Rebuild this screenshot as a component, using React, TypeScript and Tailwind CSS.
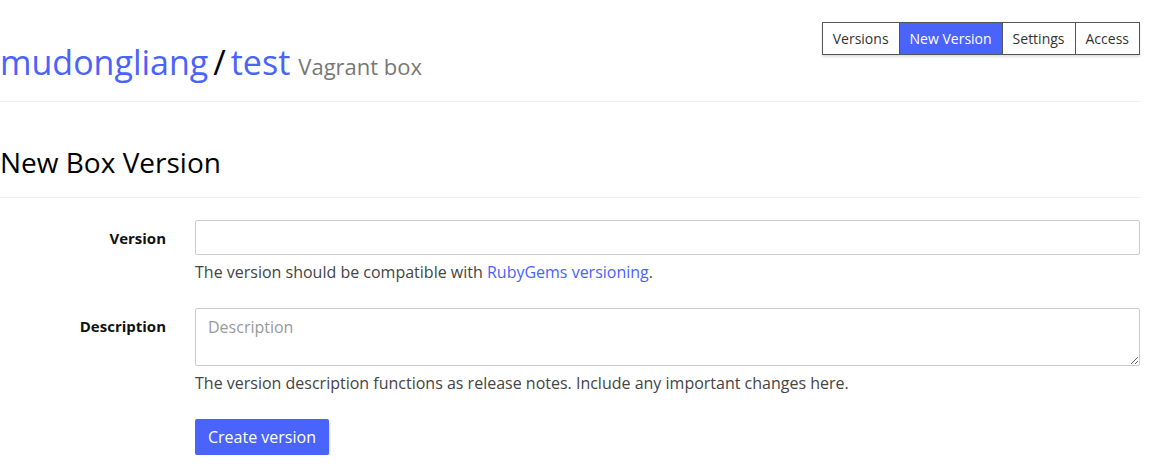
import { useState } from 'react'

const tabs = ['Versions', 'New Version', 'Settings', 'Access']

function Tabs({ active }: { active: string }) {
  return (
    <div className="flex border border-[#555] shadow-[0_2px_2px_rgba(0,0,0,0.12)]">
      {tabs.map((t, i) => (
        <a
          key={t}
          href="#"
          className={
            'h-[31px] flex items-center text-[14px] leading-none ' +
            (i > 0 ? 'border-l border-[#555] ' : '') +
            (t === active ? 'bg-[#4a63fb] text-white px-[10px]' : 'bg-white text-[#333] px-[10px]')
          }
        >
          {t}
        </a>
      ))}
    </div>
  )
}

function Row({ label, children }: { label: string; children: React.ReactNode }) {
  return (
    <div className="flex">
      <label className="w-[166px] shrink-0 text-right font-bold text-[15px] text-[#111] pt-[7px]">{label}</label>
      <div className="flex-1 ml-[29px]">{children}</div>
    </div>
  )
}

export default function App() {
  const [version, setVersion] = useState('')
  const [desc, setDesc] = useState('')

  return (
    <div className="w-[1140px] bg-white text-[#333]" style={{ fontFamily: '"Open Sans", sans-serif' }}>
      <div className="flex items-start justify-between h-[102px] border-b border-[#eee]">
        <h1 className="pt-[45px] flex items-baseline">
          <a href="#" className="text-[#4a63fb] text-[34px] leading-none">mudongliang</a>
          <span className="text-[34px] leading-none text-black mx-[5px]">/</span>
          <a href="#" className="text-[#4a63fb] text-[34px] leading-none">test</a>
          <small className="text-[22px] text-[#777] ml-[8px] leading-none">Vagrant box</small>
        </h1>
        <div className="mt-[22px]">
          <Tabs active="New Version" />
        </div>
      </div>

      <h2 className="text-[28px] text-black leading-none pt-[46px] pb-[21px] border-b border-[#eee]">New Box Version</h2>

      <form className="pt-[22px] flex flex-col" onSubmit={(e) => e.preventDefault()}>
        <Row label="Version">
          <input
            value={version}
            onChange={(e) => setVersion(e.target.value)}
            className="block w-full h-[35px] border border-[#ccc] rounded-[2px] px-[12px] text-[16px] outline-none"
          />
          <p className="text-[16px] text-[#444] mt-[5px] leading-[24px]">
            The version should be compatible with <a href="#" className="text-[#4a63fb]">RubyGems versioning</a>.
          </p>
        </Row>
        <div className="mt-[24px]">
          <Row label="Description">
            <textarea
              value={desc}
              onChange={(e) => setDesc(e.target.value)}
              placeholder="Description"
              className="block w-full h-[58px] border border-[#ccc] rounded-[2px] px-[12px] py-[6px] text-[16px] leading-[24px] outline-none placeholder:text-[#999]"
            />
            <p className="text-[16px] text-[#444] mt-[5px] leading-[24px]">
              The version description functions as release notes. Include any important changes here.
            </p>
            <button className="mt-[24px] h-[36px] px-[13px] bg-[#4a63fb] text-white text-[16px] rounded-[2px] shadow-[1px_2px_2px_rgba(0,0,0,0.15)]">
              Create version
            </button>
          </Row>
        </div>
      </form>
    </div>
  )
}
